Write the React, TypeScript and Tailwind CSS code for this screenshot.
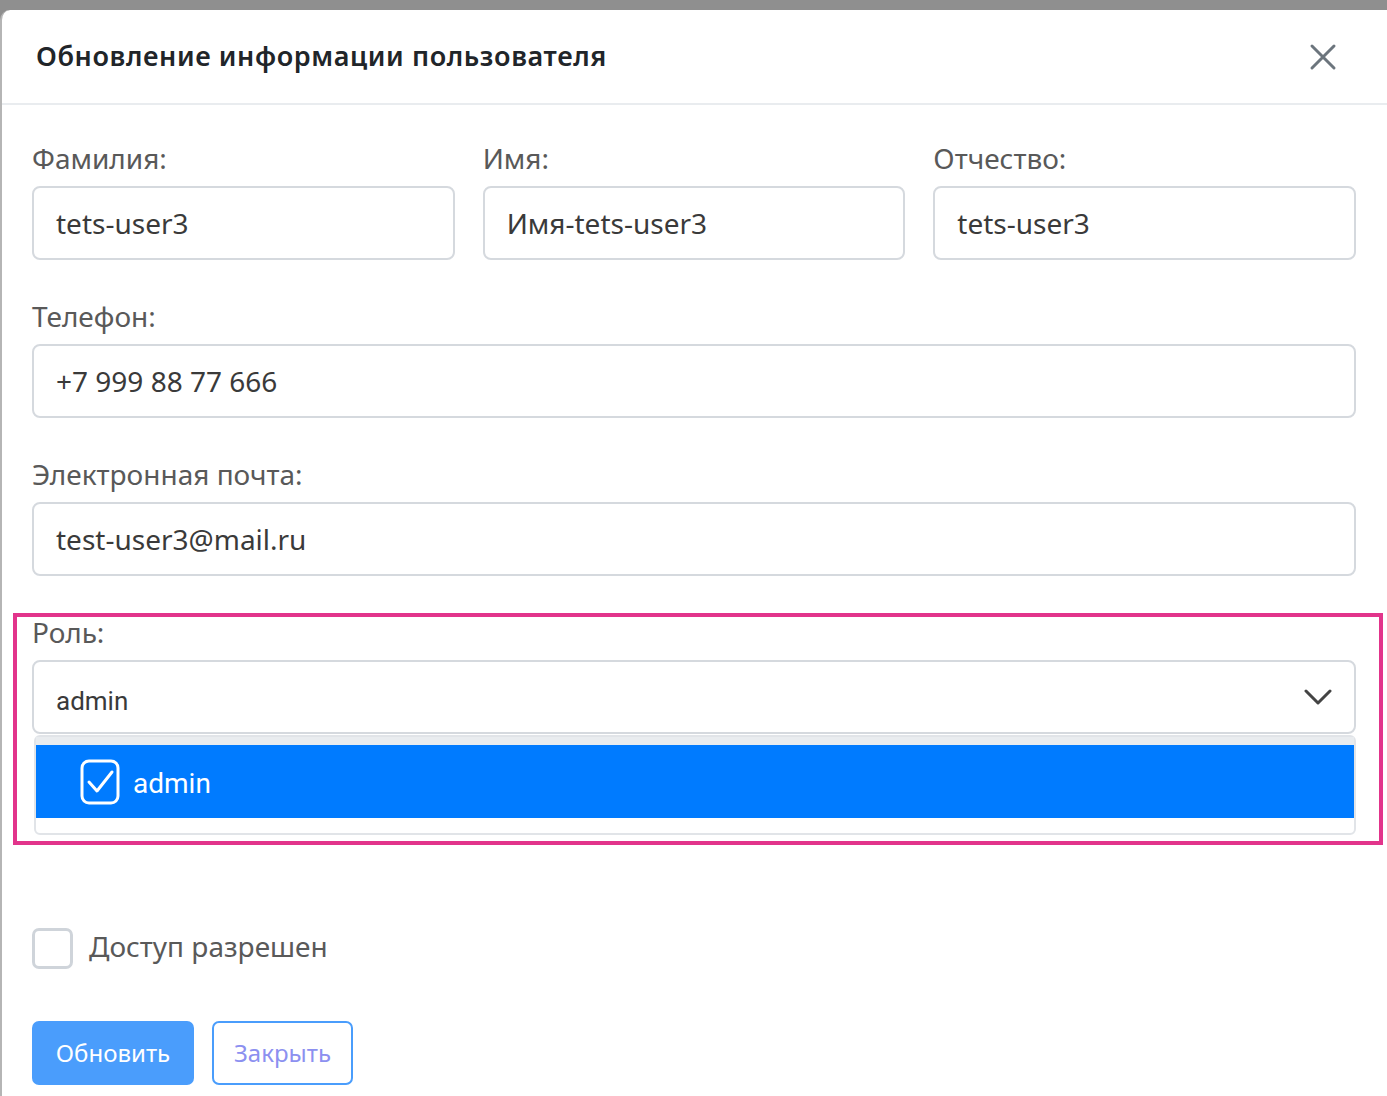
const Field = ({ label, value }: { label: string; value: string }) => (
    <div className="flex flex-col">
        <label className="h-[36px] text-[28px] leading-[36px] text-[#595959]">{label}</label>
        <div className="mt-[10px] flex h-[74px] items-center rounded-[8px] border-2 border-[#d5d9de] bg-white px-[22px] text-[28px] text-[#3a3a3a]">
            {value}
        </div>
    </div>
);

const App = () => {
    return (
        <div
            className="h-[1096px] w-[1387px] overflow-hidden bg-[#8f8f8f]"
            style={{ fontFamily: '"Noto Sans", "Open Sans", sans-serif' }}
        >
            <div className="mt-[10px] h-[1086px] rounded-tl-[10px] border-l-2 border-[#b5b5b5] bg-white">
                {/* header */}
                <div className="flex h-[95px] items-center justify-between border-b-2 border-[#e9ecef] pr-[50px] pl-[34px]">
                    <h1 className="text-[27px] font-semibold tracking-[0.6px] text-[#212529]">
                        Обновление информации пользователя
                    </h1>
                    <svg width="28" height="28" viewBox="0 0 28 28" className="text-[#6c757d]">
                        <path d="M3 3 L25 25 M25 3 L3 25" stroke="currentColor" strokeWidth="3" strokeLinecap="round" />
                    </svg>
                </div>

                {/* body */}
                <div className="pt-[35px] pr-[31px] pl-[30px]">
                    <div className="grid grid-cols-3 gap-[28px]">
                        <Field label="Фамилия:" value="tets-user3" />
                        <Field label="Имя:" value="Имя-tets-user3" />
                        <Field label="Отчество:" value="tets-user3" />
                    </div>
                    <div className="mt-[38px]">
                        <Field label="Телефон:" value="+7 999 88 77 666" />
                    </div>
                    <div className="mt-[38px]">
                        <Field label="Электронная почта:" value="test-user3@mail.ru" />
                    </div>

                    {/* highlighted role block */}
                    <div className="mt-[37px] mr-[-27px] ml-[-19px] border-4 border-[#e2348b] pr-[23px] pb-[6px] pl-[15px]">
                        <label className="block h-[30px] text-[28px] leading-[30px] text-[#595959]">Роль:</label>
                        <div
                            className="mt-[13px] flex h-[74px] items-center justify-between rounded-[8px] border-2 border-[#d5d9de] pr-[22px] pl-[22px] text-[26px] text-[#3a3a3a]"
                            style={{ fontFamily: 'Roboto, sans-serif' }}
                        >
                            <span className="pt-[8px]">admin</span>
                            <svg width="28" height="18" viewBox="0 0 28 18" className="text-[#444]">
                                <path d="M2 3 L14 15 L26 3" fill="none" stroke="currentColor" strokeWidth="3" strokeLinecap="round" strokeLinejoin="round" />
                            </svg>
                        </div>
                        <div className="mt-px ml-[2px] h-[100px] rounded-[6px] border-2 border-[#e1e4e8] bg-white">
                            <div className="h-[8px] bg-[#e9ecef]" />
                            <div
                                className="flex h-[73px] items-center bg-[#007bff] pl-[44px] text-[28px] text-white"
                                style={{ fontFamily: 'Roboto, sans-serif' }}
                            >
                                <svg width="40" height="46" viewBox="0 0 40 46">
                                    <rect x="2" y="2" width="36" height="42" rx="7" fill="none" stroke="white" strokeWidth="3" />
                                    <path d="M9 23 L17 32 L32 13" fill="none" stroke="white" strokeWidth="3" strokeLinecap="round" strokeLinejoin="round" />
                                </svg>
                                <span className="ml-[13px] pt-[4px]">admin</span>
                            </div>
                        </div>
                    </div>

                    {/* access checkbox */}
                    <div className="mt-[83px] flex items-center">
                        <div className="h-[41px] w-[41px] rounded-[7px] border-[3px] border-[#cfd4da]" />
                        <span className="ml-[16px] pb-[6px] text-[28px] leading-[30px] text-[#595959]">Доступ разрешен</span>
                    </div>

                    {/* buttons */}
                    <div className="mt-[52px] flex gap-[18px]">
                        <button className="h-[64px] w-[162px] rounded-[7px] bg-[#4a9dfc] text-[24px] text-white">
                            Обновить
                        </button>
                        <button className="h-[64px] w-[141px] rounded-[7px] border-2 border-[#4a9dfc] bg-white text-[24px] text-[#8c90f0]">
                            Закрыть
                        </button>
                    </div>
                </div>
            </div>
        </div>
    );
};

export default App;
